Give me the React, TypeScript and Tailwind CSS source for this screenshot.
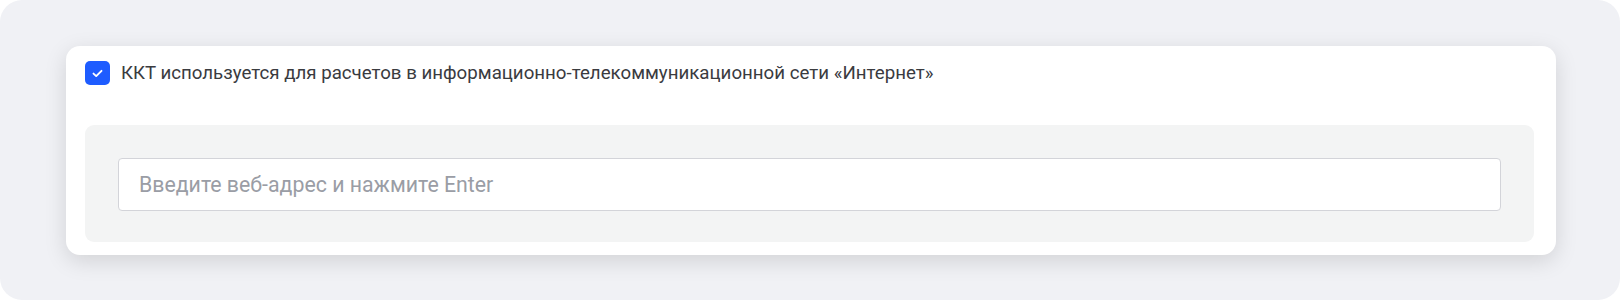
import React from "react";

export default function App() {
  return (
    <div className="w-[1620px] h-[300px] bg-[#f0f1f5] rounded-[22px] pl-[66px] pr-[64px] pt-[46px] font-['Roboto',sans-serif]">
      <div className="bg-white rounded-[14px] shadow-[0_6px_22px_rgba(0,0,0,0.13)] pl-[19px] pr-[22px] pt-[15px] pb-[13px]">
        <label className="flex items-center gap-[11px] h-[24px]">
          <span className="w-[25px] h-[24px] rounded-[5px] bg-[#1e5cff] flex items-center justify-center shrink-0">
            <svg width="11" height="9" viewBox="0 0 11 9" fill="none">
              <path d="M1.5 4.6 L4.2 7.1 L9.5 1.8" stroke="white" strokeWidth="1.9" strokeLinecap="round" strokeLinejoin="round" />
            </svg>
          </span>
          <span className="text-[18.7px] text-[#3a3b3f] leading-none whitespace-nowrap">
            ККТ используется для расчетов в информационно-телекоммуникационной сети «Интернет»
          </span>
        </label>
        <div className="mt-[40px] bg-[#f3f4f4] rounded-[9px] pt-[33px] pb-[31px] pl-[33px] pr-[33px]">
          <input
            type="text"
            placeholder="Введите веб-адрес и нажмите Enter"
            className="w-full h-[53px] bg-white border border-[#d3d4d9] rounded-[4px] pl-[20px] text-[21.3px] text-[#333] placeholder:text-[#9a9da5] outline-none font-['Roboto',sans-serif]"
          />
        </div>
      </div>
    </div>
  );
}
